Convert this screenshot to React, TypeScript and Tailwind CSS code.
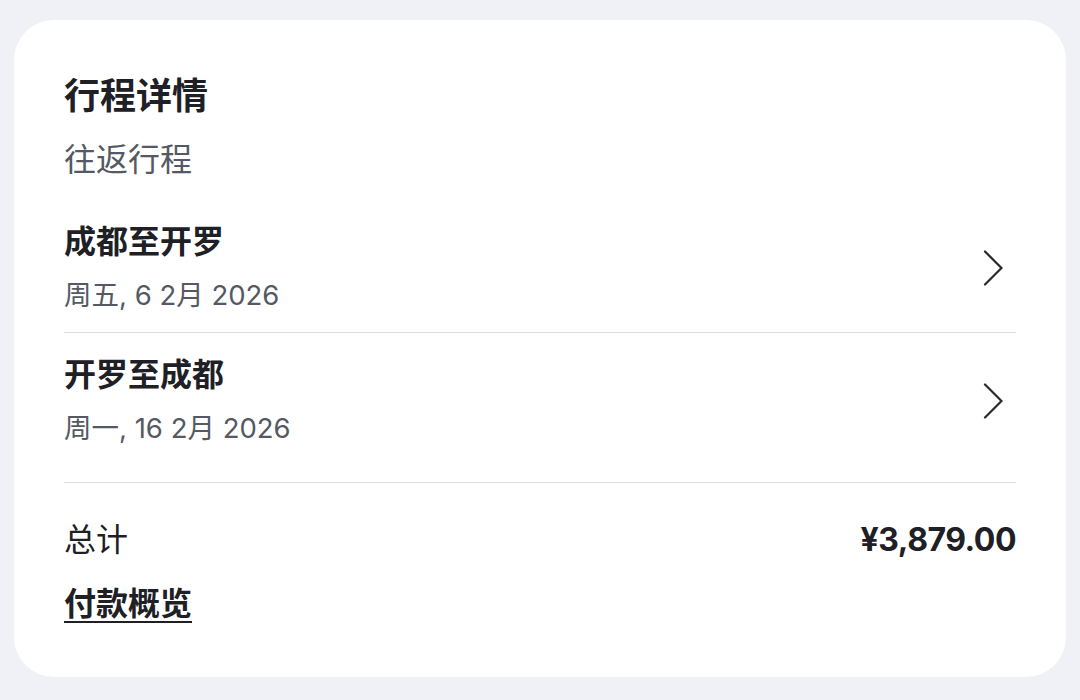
import React from "react";

const trips = [
  { route: "成都至开罗", date: "周五, 6 2月 2026", top: "mt-[38px]", bottom: "pb-[17px]" },
  { route: "开罗至成都", date: "周一, 16 2月 2026", top: "pt-[20px]", bottom: "pb-[34px]" },
];

function Chevron() {
  return (
    <svg width="20" height="36" viewBox="0 0 20 36" fill="none" className="mr-[13px] shrink-0">
      <polyline points="2,1.5 18.5,18 2,34.5" stroke="#26282d" strokeWidth="2.2" strokeLinecap="round" strokeLinejoin="miter" />
    </svg>
  );
}

export default function App() {
  return (
    <div
      className="h-[700px] w-[1080px] bg-[#f0f1f6] pt-[20px] pl-[14px]"
      style={{ fontFamily: 'Inter, "Noto Sans CJK SC", sans-serif' }}
    >
      <div className="h-[657px] w-[1052px] rounded-[40px] bg-white px-[50px] pt-[54px] text-[#1e2025]">
        <h1 className="text-[36px] font-bold leading-[44px]">行程详情</h1>
        <p className="mt-[20px] text-[32px] leading-[44px] text-[#545963]">往返行程</p>

        {trips.map((t, i) => (
          <div key={i} className={`${t.top} border-b border-[#dcdde6]`}>
            <div className={`flex items-center justify-between ${t.bottom}`}>
              <div>
                <div className="text-[32px] font-bold leading-[44px]">{t.route}</div>
                <div className="mt-[11px] text-[27.5px] leading-[40px] text-[#545963]">{t.date}</div>
              </div>
              <Chevron />
            </div>
          </div>
        ))}

        <div className="mt-[35px] flex items-center justify-between">
          <span className="text-[32px] leading-[44px]">总计</span>
          <span className="text-[32px] font-bold leading-[44px] tracking-[-0.5px]">¥3,879.00</span>
        </div>
        <div className="mt-[20px]">
          <a className="text-[32px] font-bold leading-[44px] underline decoration-2 underline-offset-[6px]">付款概览</a>
        </div>
      </div>
    </div>
  );
}
